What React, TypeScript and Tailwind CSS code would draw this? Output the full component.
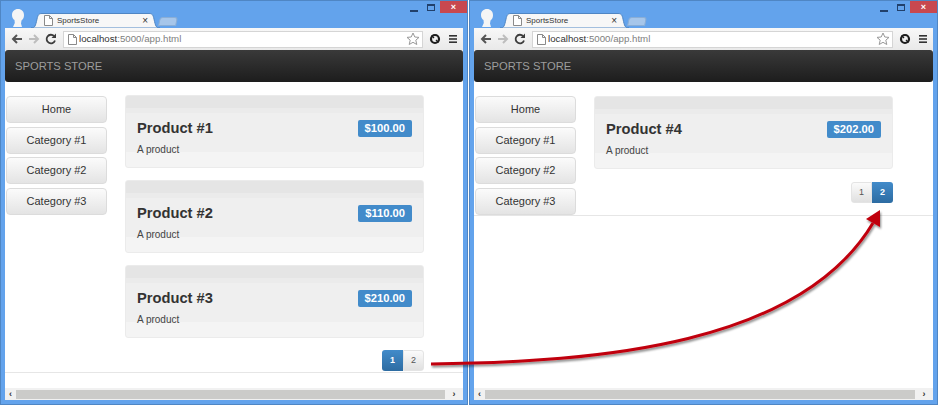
import React from "react";

function Back() {
  return (
    <svg width="12" height="12" viewBox="0 0 12 12" fill="none" strokeWidth="2">
      <path d="M11 6H2M6 2 2 6l4 4" stroke="currentColor" />
    </svg>
  );
}

function Forward() {
  return (
    <svg width="12" height="12" viewBox="0 0 12 12" fill="none" strokeWidth="2">
      <path d="M1 6h9M6 2l4 4-4 4" stroke="currentColor" />
    </svg>
  );
}

function Reload() {
  return (
    <svg width="12" height="12" viewBox="0 0 12 12" fill="none">
      <path d="M10 7.5A4.3 4.3 0 1 1 9 3" stroke="#3c3c3c" strokeWidth="1.8" />
      <path d="M11 0.5V5H6.5z" fill="#3c3c3c" />
    </svg>
  );
}

function Page() {
  return (
    <svg width="9" height="11" viewBox="0 0 9 11" fill="#fff" stroke="#8a8a8a" className="shrink-0">
      <path d="M.5.5h5l3 3v7h-8zM5.5.5v3h3" />
    </svg>
  );
}

function Star() {
  return (
    <svg width="14" height="14" viewBox="0 0 14 14" fill="#fff" stroke="#999">
      <path d="m7 1 1.8 4 4.2.4-3.2 2.8 1 4.3L7 10.3l-3.8 2.2 1-4.3L1 5.4 5.2 5z" />
    </svg>
  );
}

function Ext() {
  return (
    <svg width="12" height="12" viewBox="0 0 12 12" fill="none">
      <circle cx="6" cy="6" r="4" stroke="#1c1c1c" strokeWidth="2.2" />
      <path d="M2.500 2.500 5 5M7 7l2.500 2.500" stroke="#1c1c1c" strokeWidth="1.400" />
    </svg>
  );
}

function Menu() {
  return (
    <svg width="10" height="10" viewBox="0 0 10 10" fill="#333">
      <rect x="1" y="1" width="8" height="1.6" />
      <rect x="1" y="4.2" width="8" height="1.6" />
      <rect x="1" y="7.4" width="8" height="1.6" />
    </svg>
  );
}

function Profile() {
  return (
    <svg width="14" height="18" viewBox="0 0 14 18" fill="#f5f5f5" className="shrink-0">
      <path d="M7 0C3.500 0 1 2.500 1 6c0 2.500 1 4 2.500 5L3.800 14 2 18h9l-1-3.500 .5-3C12.500 10 13 8 13 6c0-3.500-2.500-6-6-6z" />
    </svg>
  );
}

function TabShape() {
  return (
    <svg
      className="absolute left-0 top-0"
      width="134"
      height="15"
      viewBox="0 0 134 15"
      fill="#f7f7f7"
      stroke="#4f86c4"
    >
      <path d="M0 15C4 15 4.500 13 6 6 7 1.500 8 .5 11 .5H118C121 .5 122 1.500 123 6 124.500 13 125 15 129 15z" />
    </svg>
  );
}

function NavButton({ label }: { label: string }) {
  return (
    <div className="h-[27px] flex items-center justify-center rounded-[4px] border border-[#dcdcdc] bg-gradient-to-b from-[#fbfbfb] to-[#e4e4e4] text-[11px] text-[#333]">
      {label}
    </div>
  );
}

function Card({ title, price }: { title: string; price: string }) {
  return (
    <div className="h-[73px] rounded-[3px] border border-[#ebebeb] bg-[linear-gradient(#e5e5e5_0,#e5e5e5_12px,#ebebeb_12px,#ebebeb_17px,#efefef_17px,#efefef_56px,#f4f4f4_56px)] overflow-hidden pt-[16px]">
      <div className="flex items-center justify-between px-[11px] pt-[7px]">
        <span className="text-[14.700px] leading-[18px] font-bold text-[#333]">{title}</span>
        <span className="rounded-[2px] bg-[#428bca] px-[7px] h-[17px] flex items-center text-[11.200px] font-bold text-white">
          {price}
        </span>
      </div>
      <p className="pl-[11px] pt-[6px] text-[10px] leading-[14px] text-[#444]">A product</p>
    </div>
  );
}

function Pager({ active }: { active: 1 | 2 }) {
  const on = "bg-gradient-to-b from-[#428bca] to-[#2d6ca2] text-white font-bold";
  const off = "bg-gradient-to-b from-[#fbfbfb] to-[#e0e0e0] text-[#555] border border-[#e4e4e4]";
  return (
    <div className="flex justify-end">
      <div className={`w-[21px] h-[21px] rounded-l-[3px] flex items-center justify-center text-[9px] ${active === 1 ? on : off}`}>1</div>
      <div className={`w-[21px] h-[21px] rounded-r-[3px] flex items-center justify-center text-[9px] ${active === 2 ? on : off}`}>2</div>
    </div>
  );
}

function Browser({
  width,
  products,
  active,
  cardsTop,
  pagerTop,
  lineGap,
  rightGap,
}: {
  width: string;
  products: { title: string; price: string }[];
  active: 1 | 2;
  cardsTop: string;
  pagerTop: string;
  lineGap: string;
  rightGap: string;
}) {
  return (
    <div className={`${width} h-[405px] flex flex-col bg-[#63a3ec] border border-[#4f86c4] shrink-0`}>
      {/* title bar */}
      <div className="h-[27px] flex items-end shrink-0 pl-[10px]">
        <span className="mb-[1px]"><Profile /></span>
        <div className="relative ml-[6px] w-[129px] h-[15px] flex items-center pl-[13px] pr-[12px] gap-[4px] shrink-0">
          <TabShape />
          <span className="relative"><Page /></span>
          <span className="relative text-[8px] text-[#333] flex-1">SportsStore</span>
          <span className="relative text-[10px] leading-none text-[#333]">×</span>
        </div>
        <div className="ml-[-1px] mb-[2px] w-[18px] h-[9px] rounded-t-[3px] -skew-x-12 bg-[#a6c6ea] border border-[#8aaed6] shrink-0" />
        <div className="ml-auto self-start flex items-center">
          <span className="w-[8px] h-[2px] bg-[#21406b] mr-[9px] mt-[7px]" />
          <span className="w-[8px] h-[7px] border border-[#21406b] border-t-2 mr-[5px]" />
          <span className="w-[27px] h-[12px] bg-[#c8484f] text-white text-[9px] leading-[12px] text-center font-bold">×</span>
        </div>
      </div>
      {/* page area */}
      <div className="mx-[4px] flex-1 flex flex-col bg-white min-h-0">
        <div className="h-[22px] shrink-0 bg-gradient-to-b from-[#f8f8f8] to-[#e9e9e9] flex items-center pl-[6px] pr-[5px]">
          <span className="text-[#555]"><Back /></span>
          <span className="ml-[5px] text-[#bdbdbd]"><Forward /></span>
          <span className="ml-[5px]"><Reload /></span>
          <div className="ml-[6px] flex-1 h-[17px] bg-white border border-[#d5d5d5] flex items-center pl-[4px] pr-[2px] gap-[2px]">
            <Page />
            <span className="text-[9.700px] text-[#333]">
              localhost<span className="text-[#808080]">:5000/app.html</span>
            </span>
            <span className="ml-auto"><Star /></span>
          </div>
          <span className="ml-[6px]"><Ext /></span>
          <span className="ml-[7px]"><Menu /></span>
        </div>
        <div className="h-[32px] shrink-0 rounded-[3px] bg-gradient-to-b from-[#3a3a3a] to-[#1d1d1d] flex items-center pl-[10px]">
          <span className="text-[11.200px] text-[#9d9d9d]">SPORTS STORE</span>
        </div>
        <div className={`shrink-0 ${lineGap} border-b border-[#e6e6e6] flex`}>
          <div className="w-[101px] ml-[1px] mt-[14px] flex flex-col gap-[3.500px] shrink-0">
            <NavButton label="Home" />
            <NavButton label="Category #1" />
            <NavButton label="Category #2" />
            <NavButton label="Category #3" />
          </div>
          <div className={`flex-1 ${rightGap} ml-[18px] ${cardsTop}`}>
            <div className="flex flex-col gap-[12px]">
              {products.map((p) => (
                <Card key={p.title} title={p.title} price={p.price} />
              ))}
            </div>
            <div className={pagerTop}>
              <Pager active={active} />
            </div>
          </div>
        </div>
        <div className="flex-1" />
        <div className="h-[12px] shrink-0 flex items-center bg-[#f1f1f1]">
          <span className="w-[11px] text-center text-[9px] leading-none text-[#333] font-bold">‹</span>
          <div className="flex-1 h-[9px] bg-[#cbcbc9]" />
          <span className="w-[18px] text-center text-[9px] leading-none text-[#333] font-bold">›</span>
        </div>
      </div>
      <div className="h-[4px] shrink-0" />
    </div>
  );
}

export default function App() {
  return (
    <div className="relative w-[938px] h-[405px] overflow-hidden flex bg-white font-['Liberation_Sans',Arial,sans-serif]">
      <Browser
        width="w-[468px]"
        active={1}
        cardsTop="mt-[13px]"
        pagerTop="mt-[12px] mb-[6px]"
        lineGap="h-[291px]"
        rightGap="mr-[39px]"
        products={[
          { title: "Product #1", price: "$100.00" },
          { title: "Product #2", price: "$110.00" },
          { title: "Product #3", price: "$210.00" },
        ]}
      />
      <div className="w-[1px] bg-white shrink-0" />
      <Browser
        width="w-[469px]"
        active={2}
        cardsTop="mt-[14px]"
        pagerTop="mt-[13px]"
        lineGap="h-[134px]"
        rightGap="mr-[40px]"
        products={[{ title: "Product #4", price: "$202.00" }]}
      />
      <svg className="absolute left-0 top-0 pointer-events-none" width="938" height="405" viewBox="0 0 938 405" fill="none">
        <defs>
          <filter id="s" x="-5%" y="-5%" width="110%" height="110%">
            <feDropShadow dx="1" dy="2" stdDeviation="1" floodColor="#000" floodOpacity="0.45" />
          </filter>
        </defs>
        <g filter="url(#s)">
          <path d="M431 364C600 362 800 345 873 223" stroke="#c00010" strokeWidth="3" />
          <path d="M880 210L880 227L866 219Z" fill="#c00010" />
        </g>
      </svg>
    </div>
  );
}
